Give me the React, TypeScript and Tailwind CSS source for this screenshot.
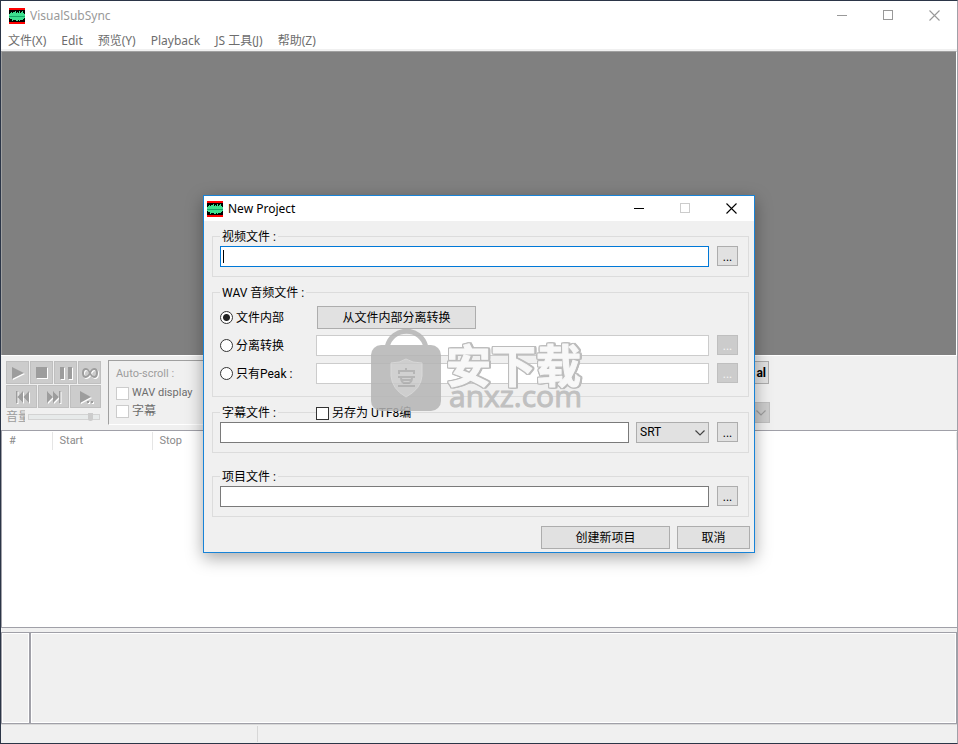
import React from "react";

const menuItems = ["文件(X)", "Edit", "预览(Y)", "Playback", "JS 工具(J)", "帮助(Z)"];

function AppIcon() {
  return (
    <svg width="16" height="16" viewBox="0 0 16 16" shapeRendering="crispEdges" className="shrink-0">
      <rect width="16" height="16" fill="#000" />
      <rect width="16" height="2" fill="#f00" />
      <rect y="14" width="16" height="2" fill="#f00" />
      <path
        d="M0 6h16v4H0zM1 5h1v6H1zM2 4h1v7H2zM3 5h1v8H3zM4 4h2v8H4zM6 3h1v9H6zM7 5h1v8H7zM8 4h1v9H8zM9 5h1v7H9zM10 3h1v10h-1zM11 5h1v7h-1zM12 4h1v8h-1zM13 3h1v9h-1zM14 5h1v6h-1z"
        fill="#3ee08f"
      />
      <rect y="8" width="16" height="1" fill="#14a868" />
    </svg>
  );
}

function WindowButtons({ color, maxColor, className }: { color: string; maxColor: string; className: string }) {
  return (
    <div className={"flex items-center " + className}>
      <button type="button" aria-label="Minimize" className="flex w-[12px] justify-center">
        <svg width="11" height="11" shapeRendering="crispEdges">
          <path d="M0 5h10v1H0z" fill={color} />
        </svg>
      </button>
      <button type="button" aria-label="Maximize" className="flex w-[12px] justify-center">
        <svg width="11" height="11" shapeRendering="crispEdges">
          <path d="M.5 .5h9v9h-9z" fill="none" stroke={maxColor} />
        </svg>
      </button>
      <button type="button" aria-label="Close" className="flex w-[12px] justify-center">
        <svg width="11" height="11">
          <path d="M.5 .5l10 10M10.500 .5l-10 10" fill="none" stroke={color} strokeWidth="1.100" />
        </svg>
      </button>
    </div>
  );
}

function PlayerButton({ label, width, d }: { label: string; width: string; d: string }) {
  return (
    <button aria-label={label} className={"flex h-[23px] items-center justify-center border border-[#bfbfbf] bg-[#cccccc] " + width}>
      <svg width="20" height="16" viewBox="0 0 20 16">
        <path d={d} fill="#fff" fillRule="evenodd" transform="translate(1 1)" />
        <path d={d} fill="#9d9d9d" fillRule="evenodd" />
      </svg>
    </button>
  );
}

function Browse({ label, disabled = false }: { label: string; disabled?: boolean }) {
  return (
    <button
      type="button"
      aria-label={label}
      disabled={disabled}
      className={
        "h-[20px] w-[21px] shrink-0 border text-center leading-[20px] " +
        (disabled ? "border-[#bfbfbf] bg-[#cccccc] text-[#f4f4f4]" : "border-[#adadad] bg-[#e1e1e1] text-black")
      }
    >
      ...
    </button>
  );
}

function Group({ title, children, className = "" }: { title: string; children: React.ReactNode; className?: string }) {
  return (
    <fieldset className={"relative min-w-0 border border-[#dcdcdc] pr-[10px] pl-[7px] " + className}>
      <legend className="px-[2px] pt-[2px] leading-[14px]">{title}</legend>
      {children}
    </fieldset>
  );
}

const radioClass =
  "size-[13px] shrink-0 appearance-none rounded-full border border-[#333] bg-white checked:bg-[radial-gradient(circle,#222_3px,#fff_4px)]";
const fieldClass = "h-[21px] min-w-0 flex-1 border border-[#7a7a7a] bg-white px-1 outline-none";
const offFieldClass = "h-[21px] min-w-0 flex-1 border border-[#cccccc] bg-white px-1 outline-none";
const pushClass = "h-[23px] border border-[#adadad] bg-[#e1e1e1] text-center leading-[23px]";

function Watermark() {
  return (
    <svg
      width="220"
      height="88"
      viewBox="0 0 220 88"
      className="pointer-events-none absolute top-[133px] left-[166px]"
      aria-hidden="true"
    >
      <g opacity="0.850">
        <path d="M17 18C22 -3 51 -3 56 18" fill="none" stroke="#b5b5b5" strokeWidth="5" />
        <rect x="1" y="16" width="70" height="66" rx="10" fill="#b5b5b5" />
        <path d="M21 34Q30 34 36 30Q42 34 52 34V47Q51 60 36 68Q22 60 21 47Z" fill="#c9c9c9" stroke="#d3d3d3" />
        <path
          d="M36 39v3M29 45v-3h15v3M28 48h17M31 48q0 5 3 6h5q3-1 3-6M32 51h9M28 57h17"
          fill="none"
          stroke="#a9a9a9"
          strokeWidth="2"
        />
      </g>
      <text
        x="76"
        y="54"
        fontFamily="Noto Sans CJK SC, sans-serif"
        fontSize="45"
        fontWeight="700"
        strokeLinejoin="round"
        fill="#f8f8f8"
        stroke="#f8f8f8"
        strokeWidth="1"
        className="[filter:drop-shadow(2px_0_0_#bcbcbc)_drop-shadow(-1px_0_0_#bcbcbc)_drop-shadow(0_1px_0_#bcbcbc)_drop-shadow(0_-1px_0_#bcbcbc)]"
      >
        安下载
      </text>
      <text x="79" y="78" fontFamily="Open Sans, sans-serif" fontSize="30" fill="#c0c0c0" stroke="#c0c0c0">
        anxz.com
      </text>
    </svg>
  );
}

function ProjectDialog() {
  return (
    <form className="absolute top-[194px] left-1/2 w-[552px] -translate-x-1/2 border border-[#1883d7] bg-[#f0f0f0] text-black shadow-[0_5px_16px_rgba(0,0,0,0.35)]">
      <header className="flex h-[25px] items-center bg-white pl-[3px]">
        <AppIcon />
        <h2 className="ml-[5px] flex-1 font-['Noto_Sans','Noto_Sans_CJK_SC',sans-serif] text-[12px]">New Project</h2>
        <WindowButtons color="#000" maxColor="#ccc" className="mr-[17px] gap-[34px]" />
      </header>
      <div className="flex flex-col pt-[7px] pr-[5px] pl-[8px]">
        <Group title="视频文件 :" className="pb-[9px]">
          <div className="flex gap-[8px] pt-[2px]">
            <div className="flex h-[21px] flex-1 items-center border border-[#0078d7] bg-white pl-[2px]">
              <span className="h-[13px] w-px bg-black" />
              <input aria-label="视频文件" className="h-full min-w-0 flex-1 outline-none" />
            </div>
            <Browse label="浏览视频文件" />
          </div>
        </Group>
        <Group title="WAV 音频文件 :" className="mt-[7px] pb-[12px]">
          <div className="flex items-center pt-[6px]">
            <label className="flex w-[97px] items-center gap-[3px]">
              <input type="radio" name="wav" defaultChecked className={radioClass} />
              文件内部
            </label>
            <button type="button" className={pushClass + " w-[159px]"}>
              从文件内部分离转换
            </button>
          </div>
          <div className="mt-[6px] flex">
            <label className="flex w-[96px] items-center gap-[3px]">
              <input type="radio" name="wav" className={radioClass} />
              分离转换
            </label>
            <input aria-label="分离转换" disabled className={offFieldClass} />
            <div className="ml-[8px]">
              <Browse label="浏览转换文件" disabled />
            </div>
          </div>
          <div className="mt-[7px] flex">
            <label className="flex w-[96px] items-center gap-[3px]">
              <input type="radio" name="wav" className={radioClass} />
              只有Peak :
            </label>
            <input aria-label="只有Peak" disabled className={offFieldClass} />
            <div className="ml-[8px]">
              <Browse label="浏览 Peak 文件" disabled />
            </div>
          </div>
        </Group>
        <Group title="字幕文件 :" className="mt-[7px] pb-[9px]">
          <label className="absolute -top-[15px] left-[103px] flex h-[16px] items-center gap-[3px] bg-[#f0f0f0] whitespace-nowrap">
            <input type="checkbox" className="size-[13px] shrink-0 appearance-none border border-[#333] bg-white" />
            另存为 UTF8编
          </label>
          <div className="flex pt-[2px]">
            <input aria-label="字幕文件" className={fieldClass} />
            <div className="relative mr-[8px] ml-[7px]">
              <select
                aria-label="字幕格式"
                className="h-[21px] w-[73px] appearance-none border border-[#adadad] bg-[#e1e1e1] pl-[3px] leading-[19px] outline-none"
              >
                <option>SRT</option>
              </select>
              <svg width="10" height="6" className="pointer-events-none absolute top-[8px] right-[4px]">
                <path d="M.5 .5L5 5l4.500-4.500" fill="none" stroke="#444" strokeWidth="1.200" />
              </svg>
            </div>
            <Browse label="浏览字幕文件" />
          </div>
        </Group>
        <Group title="项目文件 :" className="mt-[15px] pb-[9px]">
          <div className="flex gap-[8px] pt-[2px]">
            <input aria-label="项目文件" className={fieldClass} />
            <Browse label="浏览项目文件" />
          </div>
        </Group>
      </div>
      <footer className="flex justify-end gap-[7px] pt-[9px] pr-[4px] pb-[3px]">
        <button type="button" className={pushClass + " w-[129px]"}>
          创建新项目
        </button>
        <button type="button" className={pushClass + " w-[73px]"}>
          取消
        </button>
      </footer>
      <Watermark />
    </form>
  );
}

const boxClass = "size-[13px] shrink-0 appearance-none border border-[#cccccc] bg-white";

export default function App() {
  return (
    <div className="relative flex min-h-screen flex-col border border-[#2b3547] border-r-[#a0a0a8] bg-[#f0f0f0] font-[Roboto,'Noto_Sans_CJK_SC',sans-serif] text-[12px]">
      <header className="flex h-[29px] items-center bg-white pl-[8px] font-['Noto_Sans','Noto_Sans_CJK_SC',sans-serif] text-[#999]">
        <AppIcon />
        <h1 className="ml-[5px] flex-1">VisualSubSync</h1>
        <WindowButtons color="#999" maxColor="#999" className="mr-[17px] gap-[34px]" />
      </header>
      <nav className="flex h-[19px] items-center gap-[15px] bg-white pt-[2px] pl-[7px] font-['Noto_Sans','Noto_Sans_CJK_SC',sans-serif] leading-[17px] text-[#6d6d6d]">
        {menuItems.map((m) => (
          <button key={m} className="whitespace-nowrap">
            {m}
          </button>
        ))}
      </nav>
      <main className="mt-[2px] flex flex-1 flex-col">
        <section className="h-[304px] border-t border-r border-l border-[#a0a0a0] border-r-white bg-[#808080]" />
        <section className="flex h-[75px] border-t border-white pt-[4px] pl-[5px]">
          <div className="flex w-[95px] flex-col gap-px pt-px">
            <div className="flex gap-px">
              <PlayerButton label="Play" width="w-[23px]" d="M4 2L16 8L4 14Z" />
              <PlayerButton label="Stop" width="w-[23px]" d="M4 2H15V13H4Z" />
              <PlayerButton label="Pause" width="w-[23px]" d="M4 2H8V14H4ZM12 2H16V14H12Z" />
              <PlayerButton
                label="Loop"
                width="w-[23px]"
                d="M6 3Q8 3 10 6Q12 3 14 3Q18 3 18 8Q18 13 14 13Q12 13 10 10Q8 13 6 13Q2 13 2 8Q2 3 6 3ZM6 5Q4 5 4 8Q4 11 6 11Q8 11 9 8Q8 5 6 5ZM14 5Q12 5 11 8Q12 11 14 11Q16 11 16 8Q16 5 14 5Z"
              />
            </div>
            <div className="flex gap-px">
              <PlayerButton label="Previous" width="w-[31px]" d="M4 2H5.500V14H4ZM11 2V14L5.500 8ZM17 2V14L11.500 8Z" />
              <PlayerButton label="Next" width="w-[31px]" d="M3 2V14L9 8ZM9 2V14L15 8ZM15 2H16.500V14H15Z" />
              <PlayerButton label="Play to end" width="w-[31px]" d="M4 2L15 8L4 14ZM11 12H13V14H11ZM15 12H17V14H15Z" />
            </div>
            <label className="flex h-[16px] items-center gap-[3px] text-[#9d9d9d]">
              <span className="w-[19px] shrink-0 overflow-hidden leading-[16px] whitespace-nowrap">音量</span>
              <input
                type="range"
                defaultValue={90}
                className="h-[6px] w-[72px] appearance-none border border-[#d3d3d3] bg-[#e7eaea] [&::-webkit-slider-thumb]:h-[8px] [&::-webkit-slider-thumb]:w-[5px] [&::-webkit-slider-thumb]:appearance-none [&::-webkit-slider-thumb]:rounded-b-sm [&::-webkit-slider-thumb]:bg-[#cccccc]"
              />
            </label>
          </div>
          <div className="ml-[7px] flex h-[65px] w-[600px] flex-col border-t border-b border-l border-[#a0a0a0] border-b-white pt-[4px] pl-[7px] text-[#6d6d6d]">
            <span className="text-[11px] leading-[18px] text-[#9d9d9d]">Auto-scroll :</span>
            <label className="flex h-[20px] items-center gap-[3px] text-[11px]">
              <input type="checkbox" className={boxClass} />
              WAV display
            </label>
            <label className="flex h-[16px] items-center gap-[3px]">
              <input type="checkbox" className={boxClass} />
              字幕
            </label>
          </div>
          <div className="flex w-[62px] flex-col gap-[18px] pt-px">
            <button className="mr-px h-[23px] border border-[#adadad] bg-[#e1e1e1] pr-[2px] text-right leading-[23px] font-bold text-black">
              al
            </button>
            <button disabled aria-label="Open list" className="flex h-[21px] items-center justify-end border border-[#bfbfbf] bg-[#cccccc] pr-[3px]">
              <svg width="10" height="6">
                <path d="M.5 .5L5 5l4.500-4.500" fill="none" stroke="#9d9d9d" strokeWidth="1.200" />
              </svg>
            </button>
          </div>
        </section>
        <section className="flex-1 border-y border-l border-[#a0a0a8] bg-white pt-px">
          <table className="w-full table-fixed border-collapse text-left text-[11px] text-[#8a8a8a]">
            <thead>
              <tr className="h-[18px]">
                <th className="w-[50px] border-r border-[#e5e5e5] pt-px pl-[7px] font-normal">#</th>
                <th className="w-[100px] border-r border-[#e5e5e5] pt-px pl-[7px] font-normal">Start</th>
                <th className="border-r border-[#e5e5e5] pt-px pl-[7px] font-normal">Stop</th>
              </tr>
            </thead>
          </table>
        </section>
        <section className="mt-[4px] flex h-[92px]">
          <div className="w-[29px] border border-[#a0a0a8] p-px">
            <div className="h-full outline outline-white" />
          </div>
          <div className="flex-1 border border-[#a0a0a8] p-px">
            <div className="h-full outline outline-white" />
          </div>
        </section>
      </main>
      <footer className="flex h-[19px] border-t border-[#d9d9d9] pt-px">
        <div className="h-[16px] w-[257px] border-r border-[#d7d7d7]" />
      </footer>
      <ProjectDialog />
    </div>
  );
}
